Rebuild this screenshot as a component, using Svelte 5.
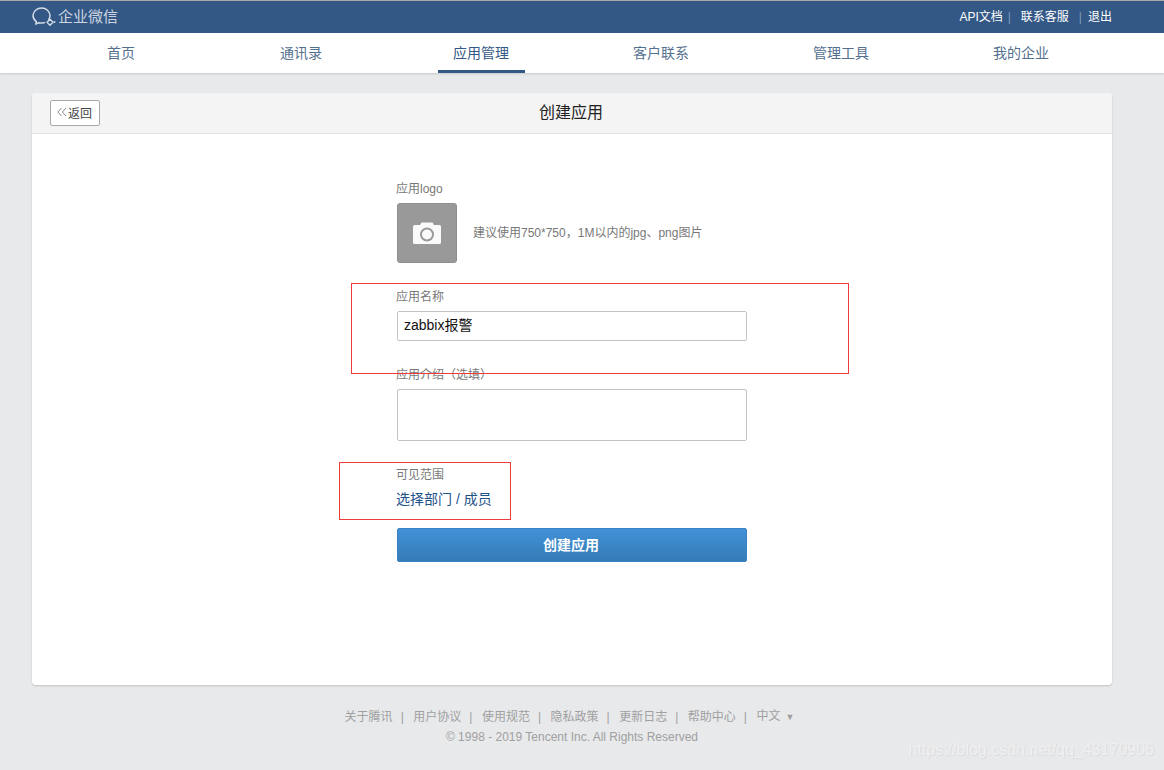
<script>
  const nav = ['首页', '通讯录', '应用管理', '客户联系', '管理工具', '我的企业'];
  const footer_links = ['关于腾讯', '用户协议', '使用规范', '隐私政策', '更新日志', '帮助中心'];
</script>

<div class="page">
  <header class="topbar">
    <div class="brand">
      <svg class="brand_icon" width="24" height="20" viewBox="0 0 24 20" fill="none">
        <path d="M16.800 12.500c.8-1.200 1.200-2.500 1.200-3.900C18 4.400 14.200 1 9.600 1S1 4.400 1 8.600c0 2.500 1.300 4.600 3.300 6l-.5 2.600 3-1.500c.9.300 1.800.4 2.800.4 1 0 2-.2 2.900-.5" stroke="#d5dde7" stroke-width="1.500" stroke-linecap="round" stroke-linejoin="round"/>
        <path d="M18 12.200l3 3-3 3-3-3z" stroke="#d5dde7" stroke-width="1.400" stroke-linejoin="round"/>
        <circle cx="22.500" cy="15" r="1" fill="#d5dde7"/>
      </svg>
      <span class="brand_name">企业微信</span>
    </div>
    <div class="top_links">
      <a>API文档</a><i class="sep first">|</i><a>联系客服</a><i class="sep second">|</i><a>退出</a>
    </div>
  </header>

  <nav class="menu">
    {#each nav as item, i}
      <div class="menu_cell"><a class="menu_item" class:active={i === 2}>{item}</a></div>
    {/each}
  </nav>

  <main class="card">
    <div class="card_head">
      <button class="back">
        <svg width="10" height="10" viewBox="0 0 10 10" fill="none"><path d="M4.500 1 .8 5l3.700 4M9 1 5.300 5 9 9" stroke="#888" stroke-width="1"/></svg>
        返回
      </button>
      <h1>创建应用</h1>
    </div>
    <form class="form">
      <label class="field_label" for="logo">应用logo</label>
      <div class="logo_row">
        <div class="logo_box" id="logo">
          <svg width="28" height="22" viewBox="0 0 28 22">
            <path d="M1.500 3H7L8.500 .5h11L21 3h5.500A1.500 1.500 0 0 1 28 4.500v16a1.500 1.500 0 0 1-1.500 1.500h-25A1.500 1.500 0 0 1 0 20.500v-16A1.500 1.500 0 0 1 1.500 3z" fill="#fafafa"/>
            <circle cx="14" cy="12.500" r="6" fill="none" stroke="#999" stroke-width="2"/>
          </svg>
        </div>
        <span class="hint">建议使用750*750，1M以内的jpg、png图片</span>
      </div>

      <label class="field_label spaced" for="name">应用名称</label>
      <input id="name" class="text_input" value="zabbix报警" />

      <label class="field_label spaced" for="intro">应用介绍（选填）</label>
      <textarea id="intro" class="text_area"></textarea>

      <div class="field_label spaced">可见范围</div>
      <a class="range_link">选择部门 / 成员</a>

      <button type="button" class="submit">创建应用</button>
    </form>
  </main>

  <footer class="footer">
    <div class="footer_links">
      {#each footer_links as link}
        <a>{link}</a><i>|</i>
      {/each}
      <a class="lang">中文<b>▼</b></a>
    </div>
    <div class="copyright">© 1998 - 2019 Tencent Inc. All Rights Reserved</div>
  </footer>

  <!-- annotations drawn on top of the screenshot -->
  <div class="mark mark_name"></div>
  <div class="mark mark_range"></div>
  <div class="watermark">https://blog.csdn.net/qq_43170906</div>
</div>

<style>
:global(body) {
  margin: 0;
  background: #e8e9eb;
}
.page {
  position: relative;
  height: 770px;
  overflow: hidden;
  font-family: "Liberation Sans", "Noto Sans CJK SC", sans-serif;
  font-size: 12px;
  color: #787878;
}
.topbar {
  height: 32px;
  border-top: 1px solid #aaa;
  background: #335885;
  display: flex;
  align-items: center;
  justify-content: space-between;
  padding: 0 52px 0 32px;
}
.brand {
  display: flex;
  align-items: center;
  gap: 2px;
  color: #ccd5e0;
  font-size: 15px;
}
.brand_name {
  padding-bottom: 4px;
}
.top_links {
  display: flex;
  align-items: center;
  color: #fff;
  line-height: 18px;
}
.sep {
  font-style: normal;
  color: #7f9bbb;
}
.sep.first {
  margin: 0 10px 0 5px;
}
.sep.second {
  margin: 0 6px 0 10px;
}
.menu {
  height: 40px;
  background: #fff;
  box-shadow: 0 1px 2px rgba(0, 0, 0, 0.14);
  padding-left: 32px;
  display: grid;
  grid-template-columns: repeat(6, 180px);
}
.menu_cell {
  display: flex;
  justify-content: center;
}
.menu_item {
  height: 40px;
  box-sizing: border-box;
  margin-left: -1px;
  padding: 0 16px 0 15px;
  line-height: 41px;
  font-size: 14px;
  color: #55708f;
}
.menu_item.active {
  color: #335885;
  border-bottom: 3px solid #335885;
}
.card {
  width: 1080px;
  height: 592px;
  margin: 20px 0 0 32px;
  background: #fff;
  border-radius: 4px;
  box-shadow: 0 1px 2px rgba(0, 0, 0, 0.16);
  overflow: hidden;
}
.card_head {
  height: 40px;
  background: #f4f4f4;
  border-bottom: 1px solid #e4e4e4;
  position: relative;
  display: flex;
  align-items: center;
  justify-content: center;
}
.card_head h1 {
  margin: 0;
  padding: 0 2px 4px 0;
  font-size: 16px;
  font-weight: 400;
  color: #222;
}
.back {
  position: absolute;
  left: 18px;
  top: 7px;
  width: 50px;
  height: 26px;
  padding: 0 0 2px 6px;
  display: flex;
  align-items: center;
  gap: 1px;
  background: #fff;
  border: 1px solid #aaa;
  border-radius: 2px;
  font: inherit;
  color: #444;
}
.form {
  width: 350px;
  margin-left: 365px;
  padding-top: 46px;
}
.field_label {
  display: block;
  line-height: 18px;
  margin: 0 0 5px -1px;
}
.spaced {
  margin-top: 25px;
}
.logo_row {
  display: flex;
  align-items: center;
  gap: 16px;
}
.logo_box {
  width: 60px;
  height: 60px;
  box-sizing: border-box;
  border: 1px solid #8e8e8e;
  border-radius: 3px;
  background: #999;
  display: flex;
  align-items: center;
  justify-content: center;
}
.hint {
  padding-bottom: 4px;
}
.text_input,
.text_area {
  display: block;
  width: 350px;
  box-sizing: border-box;
  border: 1px solid #c4c4c4;
  border-radius: 2px;
  margin: 0;
  outline: none;
  background: #fff;
  font: inherit;
}
.text_input {
  height: 30px;
  padding: 0 6px 4px;
  font-size: 14px;
  color: #111;
}
.text_area {
  height: 52px;
  resize: none;
}
.range_link {
  display: block;
  height: 20px;
  line-height: 20px;
  margin-left: -1px;
  font-size: 14px;
  color: #1d5389;
}
.submit {
  display: block;
  width: 350px;
  height: 34px;
  margin-top: 19px;
  padding: 0 2px 2px 0;
  border: 1px solid #3a83c2;
  border-radius: 2px;
  background: linear-gradient(#4290d6, #347cb6);
  color: #fff;
  font: inherit;
  font-size: 14px;
  font-weight: 700;
}
.footer {
  text-align: center;
  color: #a0a0a0;
  padding: 22px 20px 0 0;
}
.footer_links {
  display: flex;
  justify-content: center;
  align-items: center;
  gap: 8px;
  line-height: 18px;
  padding-right: 5px;
}
.footer_links i {
  font-style: normal;
  margin-right: 1.500px;
}
.lang b {
  font-weight: 400;
  font-size: 9px;
  margin-left: 5px;
}
.copyright {
  line-height: 18px;
  margin-top: 2px;
}
.mark {
  position: absolute;
  border: 1px solid #ee3b3b;
  box-sizing: border-box;
}
.mark_name {
  left: 351px;
  top: 283px;
  width: 498px;
  height: 91px;
}
.mark_range {
  left: 339px;
  top: 462px;
  width: 172px;
  height: 58px;
}
.watermark {
  position: absolute;
  right: 10px;
  top: 741px;
  font-size: 16px;
  color: #eff0f1;
  text-shadow: 1px 1px 1px #d9dadc;
}
</style>
